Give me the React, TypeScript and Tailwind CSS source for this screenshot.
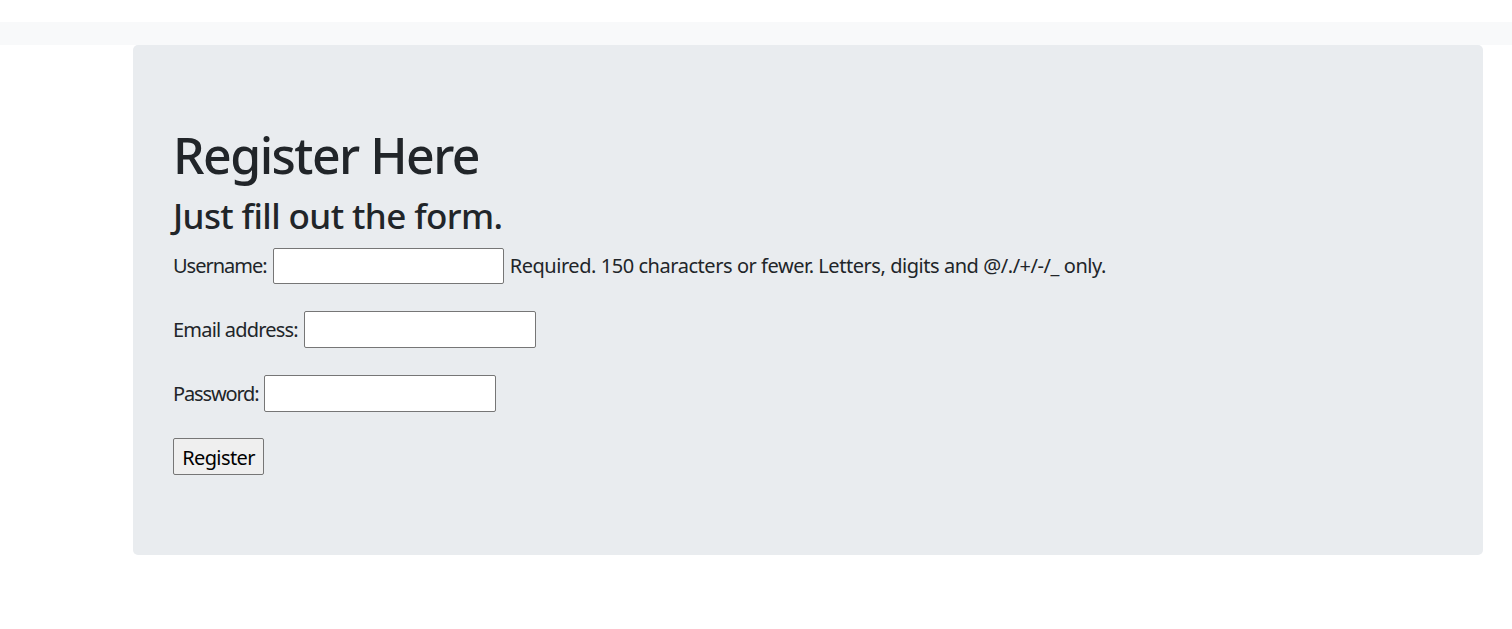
import React from "react";

export default function App() {
  const font = { fontFamily: '"Noto Sans", "Open Sans", sans-serif' };
  return (
    <div className="min-h-[629px] bg-white text-[#212529]" style={font}>
      <div className="h-[22px] bg-white" />
      <div className="h-[23px] bg-[#f8f9fa]" />
      <div className="ml-[133px] w-[1350px] rounded-[5px] bg-[#e9ecef] px-[40px] pt-[80px] pb-[80px]">
        <h1 className="text-[50px] leading-[60px] font-medium tracking-[-1.55px]">Register Here</h1>
        <h3 className="mt-[10px] text-[35px] leading-[42px] font-medium tracking-[-0.6px]">Just fill out the form.</h3>
        <form className="mt-[11px] flex flex-col tracking-[-0.45px]" onSubmit={(e) => e.preventDefault()}>
          <div className="flex h-[36px] items-center text-[20px]">
            <label className="tracking-[-1px]">Username:</label>
            <input type="text" className="ml-[6px] h-[36px] w-[231px] rounded-[2px] border border-[#767676] bg-white" />
            <span className="ml-[6px]">Required. 150 characters or fewer. Letters, digits and @/./+/-/_ only.</span>
          </div>
          <div className="mt-[27px] flex h-[37px] items-center text-[20px]">
            <label className="tracking-[-0.8px]">Email address:</label>
            <input type="email" className="ml-[6px] h-[37px] w-[232px] rounded-[2px] border border-[#767676] bg-white" />
          </div>
          <div className="mt-[27px] flex h-[37px] items-center text-[20px]">
            <label className="tracking-[-1.15px]">Password:</label>
            <input type="password" className="ml-[6px] h-[37px] w-[232px] rounded-[2px] border border-[#767676] bg-white" />
          </div>
          <div className="mt-[26px] flex">
            <button type="submit" className="h-[37px] w-[91px] rounded-[2px] border border-[#767676] bg-[#efefef] pt-[2px] text-[20px] leading-none text-black tracking-[-0.6px]">
              Register
            </button>
          </div>
        </form>
      </div>
    </div>
  );
}
